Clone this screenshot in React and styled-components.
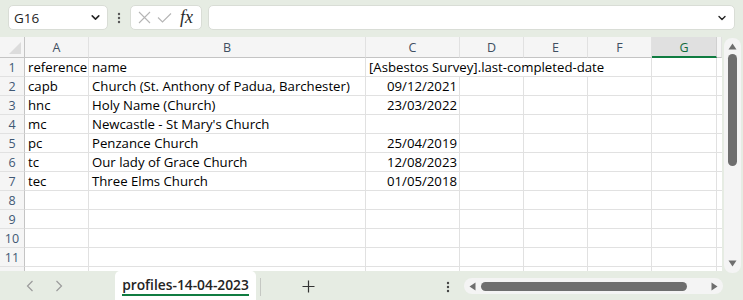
import React from 'react';
import styled, { createGlobalStyle } from 'styled-components';

const Global = createGlobalStyle`
  html, body { margin: 0; padding: 0; }
  body { font-family: "Open Sans", "Noto Sans", sans-serif; background: #e6ece3; }
  * { box-sizing: border-box; }
`;

const Frame = styled.div`
  width: 743px;
  height: 300px;
  background: #e6ece3;
  display: flex;
  flex-direction: column;
  overflow: hidden;
`;

const Toolbar = styled.div`
  height: 37px;
  display: flex;
  align-items: flex-start;
  padding: 5px 8px 0 8px;
`;

const Box = styled.div`
  height: 25px;
  background: #ffffff;
  border: 1px solid #d9ddd6;
  border-radius: 5px;
  display: flex;
  align-items: center;
`;

const NameBox = styled(Box)`
  width: 100px;
  padding: 0 6px 0 5px;
  justify-content: space-between;
  font-size: 13.5px;
  color: #242424;
`;

const DotsSlot = styled.div`
  width: ${p => p.$w}px;
  height: 25px;
  display: flex;
  align-items: center;
  justify-content: center;
`;

const FxBox = styled(Box)`
  width: 72px;
  padding: 0 4px 0 7px;
  gap: 6px;
`;

const FxText = styled.span`
  font-family: "Liberation Serif", "DejaVu Serif", serif;
  font-style: italic;
  font-size: 18px;
  line-height: 18px;
  color: #2a2a2a;
  margin-left: 2px;
  margin-top: -2px;
`;

const Formula = styled(Box)`
  flex: 1;
  margin-left: 6px;
  justify-content: flex-end;
  padding-right: 7px;
`;

const Middle = styled.div`
  height: 234px;
  display: flex;
`;

const Sheet = styled.div`
  width: 722px;
  height: 234px;
  overflow: hidden;
  background: #ffffff;
  display: grid;
  grid-template-columns: 25px 64px 277px 94px 64px 64px 64px 65px 5px;
  grid-template-rows: 21px repeat(12, 19px);
  font-size: 13.2px;
`;

const Corner = styled.div`
  background: #f5f5f5;
  border-right: 1px solid #c4c4c4;
  border-bottom: 1px solid #c4c4c4;
  position: relative;
  &::after {
    content: "";
    position: absolute;
    right: 3px;
    bottom: 3px;
    width: 0;
    height: 0;
    border-left: 12px solid transparent;
    border-bottom: 12px solid #dcdcdc;
  }
`;

const ColHead = styled.div`
  background: ${p => (p.$sel ? '#e0e0e0' : '#f5f5f5')};
  border-right: 1px solid ${p => (p.$sel ? '#d0d0d0' : '#e1e1e1')};
  border-bottom: ${p => (p.$sel ? '2px solid #107c41' : '1px solid #c4c4c4')};
  color: ${p => (p.$sel ? '#0f6b3c' : '#3f4f61')};
  font-size: 12.5px;
  display: flex;
  align-items: center;
  justify-content: center;
  padding-top: ${p => (p.$sel ? '1px' : '0')};
`;

const RowHead = styled.div`
  background: #f5f5f5;
  border-right: 1px solid #c4c4c4;
  border-bottom: 1px solid #e1e1e1;
  color: #3f5874;
  font-size: 12.5px;
  display: flex;
  align-items: center;
  justify-content: center;
`;

const Cell = styled.div`
  border-right: 1px solid #e1e1e1;
  border-bottom: 1px solid #e1e1e1;
  color: #000;
  padding: 0 2px 0 3px;
  display: flex;
  align-items: center;
  justify-content: ${p => (p.$right ? 'flex-end' : 'flex-start')};
  white-space: nowrap;
  overflow: visible;
  grid-column: ${p => (p.$span ? `span ${p.$span}` : 'auto')};
`;

const VBar = styled.div`
  flex: 1;
  display: flex;
  justify-content: flex-end;
  padding: 1px 2px 0 0;
`;

const VTrack = styled.div`
  width: 17px;
  height: 235px;
  background: #f4f4f4;
  border-radius: 8px;
  display: flex;
  flex-direction: column;
  align-items: center;
  padding: 5px 0 6px;
`;

const VThumb = styled.div`
  width: 9px;
  height: 112px;
  background: #6e6e6e;
  border-radius: 5px;
  margin-top: 4px;
`;

const Spacer = styled.div`
  flex: 1;
`;

const Bottom = styled.div`
  height: 29px;
  display: flex;
  align-items: stretch;
`;

const Nav = styled.div`
  width: 115px;
  display: flex;
  align-items: center;
  padding-left: 26px;
  gap: 21px;
`;

const Tab = styled.div`
  width: 141px;
  background: #ffffff;
  border-radius: 5px 5px 0 0;
  display: flex;
  align-items: center;
  justify-content: center;
  padding-top: 1px;
`;

const TabLabel = styled.span`
  font-size: 13.8px;
  font-weight: 600;
  color: #242424;
  border-bottom: 2px solid #107c41;
  padding-bottom: 1px;
  line-height: 17px;
`;

const Sep = styled.div`
  width: 1px;
  height: 18px;
  background: #c5c8c3;
  align-self: center;
  margin-left: 4px;
  margin-top: 2px;
`;

const Plus = styled.div`
  width: 94px;
  display: flex;
  align-items: center;
  justify-content: center;
  padding-top: 2px;
`;

const More = styled.div`
  width: 20px;
  display: flex;
  align-items: center;
  justify-content: center;
  margin-right: 6px;
  padding-top: 3px;
`;

const HTrack = styled.div`
  width: 259px;
  height: 16px;
  margin: 7px 20px 0 0;
  background: #f4f4f4;
  border-radius: 8px;
  display: flex;
  align-items: center;
  padding: 0 5px 0 5px;
`;

const HThumb = styled.div`
  width: 206px;
  height: 9px;
  border-radius: 5px;
  background: #6e6e6e;
  margin-left: 5px;
`;

const Chevron = ({ size = 10 }) => (
  <svg width={size} height={size} viewBox="0 0 10 10">
    <path d="M2 3.5 L5 6.5 L8 3.5" fill="none" stroke="#242424" strokeWidth="1.4" strokeLinecap="round" strokeLinejoin="round" />
  </svg>
);

const VDots = ({ color = '#444' }) => (
  <svg width="4" height="12" viewBox="0 0 4 12">
    <circle cx="2" cy="2" r="1.2" fill={color} />
    <circle cx="2" cy="6" r="1.2" fill={color} />
    <circle cx="2" cy="10" r="1.2" fill={color} />
  </svg>
);

const cols = ['A', 'B', 'C', 'D', 'E', 'F', 'G'];

const data = [
  ['reference', 'name', '[Asbestos Survey].last-completed-date'],
  ['capb', 'Church (St. Anthony of Padua, Barchester)', '09/12/2021'],
  ['hnc', 'Holy Name (Church)', '23/03/2022'],
  ['mc', "Newcastle - St Mary's Church", ''],
  ['pc', 'Penzance Church', '25/04/2019'],
  ['tc', 'Our lady of Grace Church', '12/08/2023'],
  ['tec', 'Three Elms Church', '01/05/2018'],
  ['', '', ''],
  ['', '', ''],
  ['', '', ''],
  ['', '', ''],
  ['', '', ''],
];

export default function App() {
  return (
    <Frame>
      <Global />
      <Toolbar>
        <NameBox>
          <span>G16</span>
          <Chevron size={11} />
        </NameBox>
        <DotsSlot $w={22}>
          <VDots color="#555" />
        </DotsSlot>
        <FxBox>
          <svg width="13" height="13" viewBox="0 0 13 13">
            <path d="M1 1 L12 12 M12 1 L1 12" stroke="#b5b5b5" strokeWidth="1.1" fill="none" />
          </svg>
          <svg width="15" height="13" viewBox="0 0 15 13">
            <path d="M1 6.5 L5.5 11 L14 2.5" stroke="#b5b5b5" strokeWidth="1.1" fill="none" />
          </svg>
          <FxText>fx</FxText>
        </FxBox>
        <Formula>
          <Chevron size={10} />
        </Formula>
      </Toolbar>
      <Middle>
        <Sheet>
          <Corner />
          {cols.map(c => (
            <ColHead key={c} $sel={c === 'G'}>{c}</ColHead>
          ))}
          <ColHead />
          {data.map((r, i) => {
            const first = i === 0;
            return (
              <React.Fragment key={i}>
                <RowHead>{i < 11 ? i + 1 : ''}</RowHead>
                <Cell>{r[0]}</Cell>
                <Cell>{r[1]}</Cell>
                {first ? (
                  <Cell $span={4}>{r[2]}</Cell>
                ) : (
                  <>
                    <Cell $right>{r[2]}</Cell>
                    <Cell />
                    <Cell />
                    <Cell />
                  </>
                )}
                <Cell />
                <Cell />
              </React.Fragment>
            );
          })}
        </Sheet>
        <VBar>
          <VTrack>
            <svg width="9" height="7" viewBox="0 0 9 7">
              <path d="M4.5 0.5 L8.5 6.5 L0.5 6.5 Z" fill="#6e6e6e" />
            </svg>
            <VThumb />
            <Spacer />
            <svg width="9" height="7" viewBox="0 0 9 7">
              <path d="M0.5 0.5 L8.5 0.5 L4.5 6.5 Z" fill="#6e6e6e" />
            </svg>
          </VTrack>
        </VBar>
      </Middle>
      <Bottom>
        <Nav>
          <svg width="8" height="12" viewBox="0 0 8 12">
            <path d="M6.5 1 L1.5 6 L6.5 11" stroke="#9b9b9b" strokeWidth="1.2" fill="none" />
          </svg>
          <svg width="8" height="12" viewBox="0 0 8 12">
            <path d="M1.5 1 L6.5 6 L1.5 11" stroke="#9b9b9b" strokeWidth="1.2" fill="none" />
          </svg>
        </Nav>
        <Tab>
          <TabLabel>profiles-14-04-2023</TabLabel>
        </Tab>
        <Sep />
        <Plus>
          <svg width="13" height="13" viewBox="0 0 13 13">
            <path d="M6.5 0.5 V12.5 M0.5 6.5 H12.5" stroke="#333" strokeWidth="1.2" fill="none" />
          </svg>
        </Plus>
        <Spacer />
        <More>
          <VDots color="#444" />
        </More>
        <HTrack>
          <svg width="7" height="9" viewBox="0 0 7 9">
            <path d="M6.5 0.5 L6.5 8.5 L0.5 4.5 Z" fill="#6e6e6e" />
          </svg>
          <HThumb />
          <Spacer />
          <svg width="7" height="9" viewBox="0 0 7 9">
            <path d="M0.5 0.5 L6.5 4.5 L0.5 8.5 Z" fill="#6e6e6e" />
          </svg>
        </HTrack>
      </Bottom>
    </Frame>
  );
}
